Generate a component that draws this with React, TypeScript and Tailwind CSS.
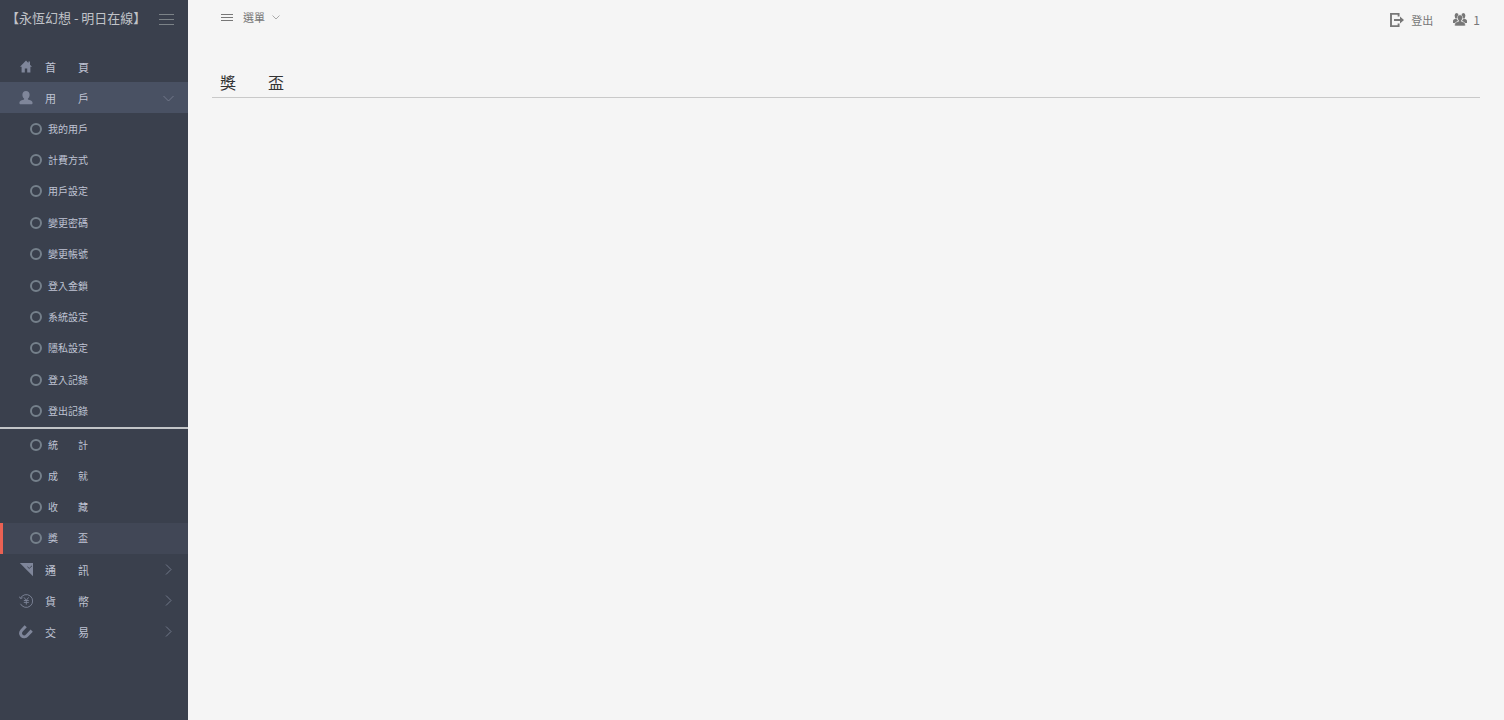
import type { ReactNode } from "react";

const accountItems = [
    "我的用戶",
    "計費方式",
    "用戶設定",
    "變更密碼",
    "變更帳號",
    "登入金鎖",
    "系統設定",
    "隱私設定",
    "登入記錄",
    "登出記錄",
];

const recordItems = [
    "統\u3000\u3000計",
    "成\u3000\u3000就",
    "收\u3000\u3000藏",
    "獎\u3000\u3000盃",
];

const currentItem = "獎\u3000\u3000盃";

function HomeIcon() {
    return (
        <svg viewBox="0 0 14 14" className="size-3.5" fill="currentColor">
            <path d="M7 .5 1 6.800h1.600v5.700h3.200V8.500h2.400v4h3.200V6.800H13L11 4.700V1.500H9.400V3z" />
        </svg>
    );
}

function UserIcon() {
    return (
        <svg viewBox="0 0 14 14" className="size-3.5" fill="currentColor">
            <path d="M7 0c2.200 0 3.600 1.600 3.600 3.700 0 1.700-.7 3.100-1.700 3.900v.9c1.900.5 4.700 1.200 4.700 3.400 0 .9-.6 1.300-1.300 1.300H1.700c-.7 0-1.300-.4-1.300-1.300 0-2.200 2.800-2.900 4.700-3.400v-.9C4.100 6.800 3.400 5.400 3.400 3.700 3.400 1.600 4.800 0 7 0z" />
        </svg>
    );
}

function MessageIcon() {
    return (
        <svg viewBox="0 0 14 14" className="size-3.5">
            <path d="M.8 0H14v13.200z" fill="currentColor" />
            <path
                d="m8.400 3.800 1.800 1.600 2.800-2.600"
                fill="none"
                stroke="#3a404d"
                strokeWidth=".9"
            />
        </svg>
    );
}

function CurrencyIcon() {
    return (
        <svg
            viewBox="0 0 14 14"
            className="size-3.5"
            fill="none"
            stroke="currentColor"
            strokeWidth=".9"
        >
            <path d="M1.500 4.200A6.400 6.400 0 1 1 1.500 9.800M.3 2.600l1.200 2 2-.8" />
            <path d="m5 3.400 2.300 2.900 2.300-2.900M7.300 6.300v4.300M4.800 6.500h5M4.800 8.400h5" />
        </svg>
    );
}

function MagnetIcon() {
    return (
        <svg
            viewBox="0 0 14 14"
            className="size-3.5"
            fill="none"
            stroke="currentColor"
            strokeWidth="3"
        >
            <path d="M6.700 1.300 2.900 5.300C1 7.300 1.200 9.600 2.700 10.900c1.600 1.400 3.900 1.200 5.600-.7L12.700 5.600" />
        </svg>
    );
}

function LogoutIcon() {
    return (
        <svg viewBox="0 0 14 14" className="size-3.5">
            <path
                d="M8.600 3.500V.9H1v12.200h7.600v-2.600"
                fill="none"
                stroke="currentColor"
                strokeWidth="1.900"
            />
            <path
                d="M4 6.100h6V3.500L14 7l-4 3.500V7.900H4z"
                fill="currentColor"
            />
        </svg>
    );
}

function PeopleIcon() {
    return (
        <svg viewBox="0 0 14 14" className="size-3.5" fill="currentColor">
            <ellipse cx="3.600" cy="2.800" rx="2" ry="2.700" />
            <ellipse cx="10.400" cy="2.800" rx="2" ry="2.700" />
            <path d="M0 10V8c0-1.500 1.400-1.900 3-2.500L5 7.500 3 10zM14 10V8c0-1.500-1.400-1.900-3-2.500L9 7.500 11 10z" />
            <path
                d="M7 1.800c1.700 0 2.600 1.200 2.600 2.900 0 1.200-.4 2.200-1.200 2.900v.7c2.100.6 3.900 1.100 3.900 2.900V13H1.700v-1.800c0-1.800 1.800-2.300 3.900-2.900v-.7c-.8-.7-1.200-1.700-1.200-2.900C4.400 3 5.300 1.800 7 1.800z"
                stroke="#f5f5f5"
                strokeWidth=".6"
            />
        </svg>
    );
}

function Chevron({ down = false }: { down?: boolean }) {
    return (
        <svg
            viewBox="0 0 12 12"
            className={`size-3 ${down ? "rotate-90" : ""}`}
            fill="none"
            stroke="currentColor"
            strokeWidth=".9"
        >
            <path d="m4 .5 5 5-5 5" />
        </svg>
    );
}

function MenuRow({ icon, label, arrow, open }: {
    icon: ReactNode;
    label: string;
    arrow?: boolean;
    open?: boolean;
}) {
    const rowClass = `flex h-full min-h-[31px] w-full items-center pr-3.5 pl-[19px] text-left text-[11px] leading-4 ${open ? "bg-[#495163]" : ""}`;
    const content = (
        <>
            <span className="mr-3 text-[#7f869a]">{icon}</span>
            <span className="grow whitespace-pre">{label}</span>
            {arrow && (
                <span className="text-[#777e90]">
                    <Chevron down={open} />
                </span>
            )}
        </>
    );

    return arrow ? (
        <button type="button" aria-expanded={!!open} className={rowClass}>
            {content}
        </button>
    ) : (
        <a href="#" className={rowClass}>
            {content}
        </a>
    );
}

function SubRow({ label, active }: { label: string; active?: boolean }) {
    return (
        <a
            href="#"
            aria-current={active ? "page" : undefined}
            className={`flex h-full items-center gap-1.5 border-l-3 pl-[27px] text-[10px] leading-4 ${active ? "border-[#ea6153] bg-[#414756]" : "border-transparent"}`}
        >
            <span className="size-3 rounded-full border-2 border-[#75808b]" />
            <span className="whitespace-pre">{label}</span>
        </a>
    );
}

export default function App() {
    return (
        <div
            lang="zh-Hant"
            className="flex min-h-screen bg-[#f5f5f5] font-['Noto_Sans_CJK_TC',sans-serif] text-[11px] text-[#777]"
        >
            <aside className="w-47 shrink-0 bg-[#3a404d] text-[#bfc3d3]">
                <div className="flex h-[51px] items-start justify-between pt-2 pr-3.5 pl-1.5">
                    <a
                        href="#"
                        className="text-[13px] leading-5 whitespace-nowrap text-[#c0c3c8]"
                    >
                        【永恆幻想 - 明日在線】
                    </a>
                    <button
                        type="button"
                        aria-label="選單"
                        className="flex flex-col gap-1 pt-1.5"
                    >
                        <span className="h-px w-[15px] bg-[#7b8287]" />
                        <span className="h-px w-[15px] bg-[#7b8287]" />
                        <span className="h-px w-[15px] bg-[#7b8287]" />
                    </button>
                </div>

                <nav>
                    <MenuRow icon={<HomeIcon />} label={"首\u3000\u3000頁"} />
                    <MenuRow
                        icon={<UserIcon />}
                        label={"用\u3000\u3000戶"}
                        arrow
                        open
                    />
                    <ul className="grid min-h-[314px] auto-rows-fr">
                        {accountItems.map((item) => (
                            <li key={item}>
                                <SubRow label={item} />
                            </li>
                        ))}
                    </ul>
                    <hr className="border-t-2 border-[#c2c5c8]" />
                    <ul className="grid min-h-[125px] auto-rows-fr">
                        {recordItems.map((item) => (
                            <li key={item}>
                                <SubRow
                                    label={item}
                                    active={item === currentItem}
                                />
                            </li>
                        ))}
                    </ul>
                    <ul className="grid min-h-[94px] auto-rows-fr">
                        <li>
                            <MenuRow
                                icon={<MessageIcon />}
                                label={"通\u3000\u3000訊"}
                                arrow
                            />
                        </li>
                        <li>
                            <MenuRow
                                icon={<CurrencyIcon />}
                                label={"貨\u3000\u3000幣"}
                                arrow
                            />
                        </li>
                        <li>
                            <MenuRow
                                icon={<MagnetIcon />}
                                label={"交\u3000\u3000易"}
                                arrow
                            />
                        </li>
                    </ul>
                </nav>
            </aside>

            <div className="grow px-6">
                <header className="flex items-start justify-between pl-2">
                    <button
                        type="button"
                        className="flex items-center pt-[9px] leading-4"
                    >
                        <span className="mr-2.5 ml-px flex flex-col gap-[2px]">
                            <span className="h-px w-3 bg-[#777]" />
                            <span className="h-px w-3 bg-[#777]" />
                            <span className="h-px w-3 bg-[#777]" />
                        </span>
                        選單
                        <svg
                            viewBox="0 0 8 8"
                            className="ml-[7px] size-2"
                            fill="none"
                            stroke="#aaa"
                        >
                            <path d="m.5 2.500 3.500 3.500 3.500-3.500" />
                        </svg>
                    </button>
                    <div className="flex gap-5 pt-3 leading-4">
                        <a href="#" className="flex items-center gap-[7px]">
                            <LogoutIcon />
                            登出
                        </a>
                        <a href="#" className="flex items-center gap-1.5">
                            <PeopleIcon />
                            <span className="text-[12px] leading-4">1</span>
                        </a>
                    </div>
                </header>

                <main className="pt-10">
                    <h1 className="border-b border-[#c9c9c9] px-2 pb-px text-[16px] leading-7 whitespace-pre text-[#333]">
                        {"獎\u3000\u3000盃"}
                    </h1>
                </main>
            </div>
        </div>
    );
}
